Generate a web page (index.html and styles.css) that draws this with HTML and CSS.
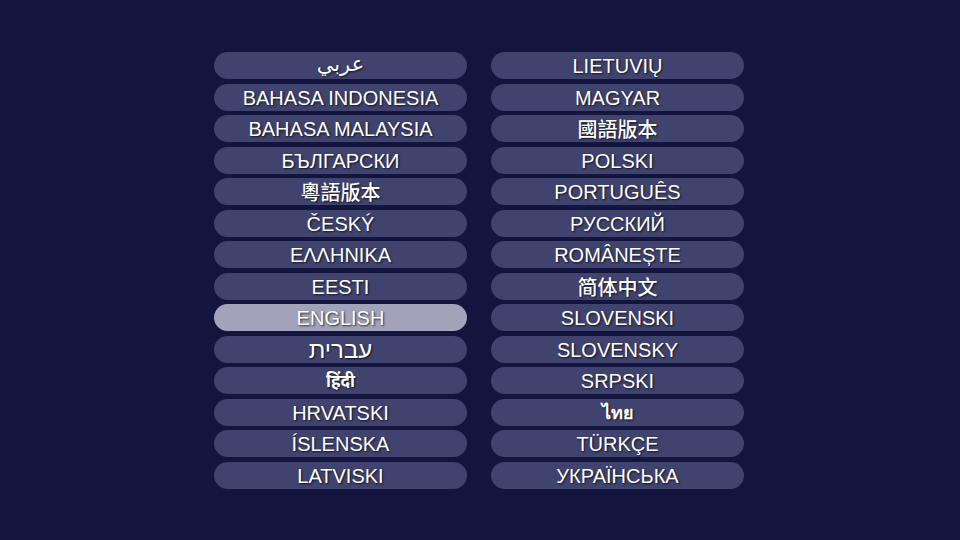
FILE: index.html
```html
<!DOCTYPE html>
<html>
<head>
<meta charset="utf-8">
<link rel="stylesheet" href="styles.css">
</head>
<body>
<div class="screen">
  <div class="grid">
    <div class="col">
      <div class="pill ar" lang="ar">عربي</div>
      <div class="pill">BAHASA INDONESIA</div>
      <div class="pill">BAHASA MALAYSIA</div>
      <div class="pill">БЪЛГАРСКИ</div>
      <div class="pill cjk" lang="zh-HK">粵語版本</div>
      <div class="pill">ČESKÝ</div>
      <div class="pill">ΕΛΛΗΝΙΚΑ</div>
      <div class="pill">EESTI</div>
      <div class="pill selected">ENGLISH</div>
      <div class="pill he" lang="he">עברית</div>
      <div class="pill hi" lang="hi">हिंदी</div>
      <div class="pill">HRVATSKI</div>
      <div class="pill">ÍSLENSKA</div>
      <div class="pill">LATVISKI</div>
    </div>
    <div class="col">
      <div class="pill">LIETUVIŲ</div>
      <div class="pill">MAGYAR</div>
      <div class="pill cjk" lang="zh-TW">國語版本</div>
      <div class="pill">POLSKI</div>
      <div class="pill">PORTUGUÊS</div>
      <div class="pill">РУССКИЙ</div>
      <div class="pill">ROMÂNEȘTE</div>
      <div class="pill cjk" lang="zh-CN">简体中文</div>
      <div class="pill">SLOVENSKI</div>
      <div class="pill">SLOVENSKY</div>
      <div class="pill">SRPSKI</div>
      <div class="pill th" lang="th">ไทย</div>
      <div class="pill">TÜRKÇE</div>
      <div class="pill">УКРАЇНСЬКА</div>
    </div>
  </div>
</div>
</body>
</html>
```
FILE: styles.css
```css
html, body {
  margin: 0;
  padding: 0;
  background: #13153f;
}
.screen {
  width: 960px;
  height: 540px;
  background: #13153f;
  display: flex;
  justify-content: center;
  align-items: flex-start;
  box-sizing: border-box;
  padding-top: 52px;
}
.grid {
  display: flex;
  gap: 24px;
  margin-left: -2px;
}
.col {
  display: flex;
  flex-direction: column;
  gap: 4.5px;
}
.pill {
  width: 253px;
  height: 27px;
  border-radius: 13.5px;
  background: #40436e;
  color: #ffffff;
  font-family: "Liberation Sans", Arial, "Noto Sans CJK SC", sans-serif;
  font-size: 20px;
  line-height: 28px;
  text-align: center;
  text-shadow: 1px 1px 2px rgba(0, 0, 0, 0.75);
  white-space: nowrap;
  overflow: hidden;
}
.pill.selected {
  background: #a2a3ba;
}
.pill.cjk {
  font-family: "Noto Sans CJK TC", "Noto Sans CJK SC", sans-serif;
  font-weight: 500;
  font-size: 20px;
  line-height: 27px;
}
.pill.ar {
  font-family: "DejaVu Sans", "Noto Sans", sans-serif;
  font-size: 21px;
  line-height: 24px;
}
.pill.he {
  font-family: "Liberation Sans", "DejaVu Sans", sans-serif;
  font-size: 24px;
  line-height: 27px;
}
.pill.hi {
  font-weight: 700;
  font-family: "Noto Sans", "DejaVu Sans", sans-serif;
  font-size: 17px;
  line-height: 27px;
}
.pill.th {
  font-weight: 700;
  font-family: "Noto Sans", "DejaVu Sans", sans-serif;
  font-size: 18px;
  line-height: 27px;
}
```
